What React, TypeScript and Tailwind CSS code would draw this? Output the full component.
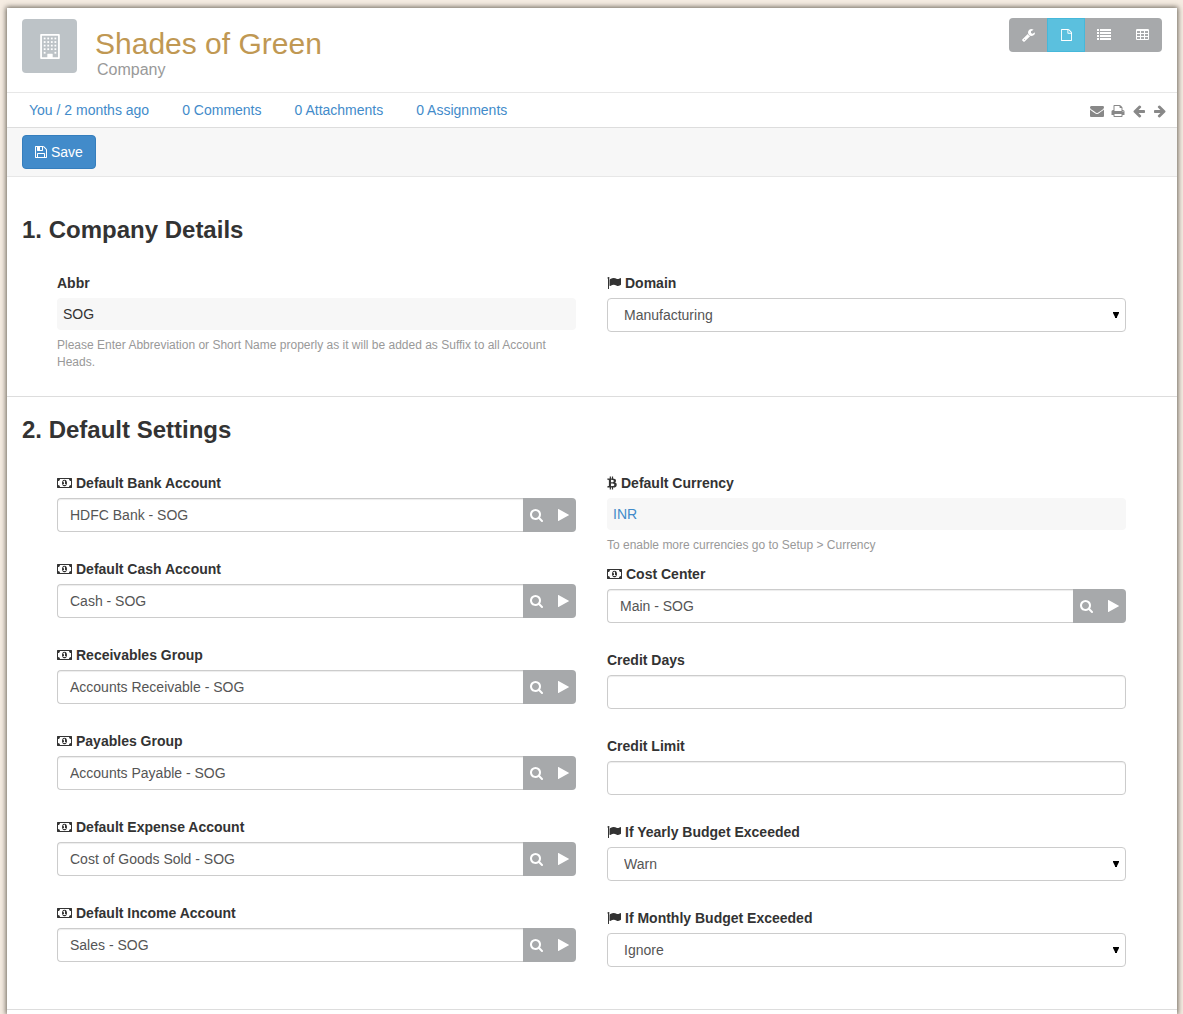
import React, { useState } from "react";
import type { ReactNode } from "react";

type Glyph = { box: string; w: string; d: string };

const ICONS = {
  search: {
    box: "64 128 1664 1664",
    w: "h-[13px] w-[13px]",
    d: "M1216 832q0-185-131.5-316.5t-316.5-131.5-316.5 131.5-131.5 316.5 131.5 316.5 316.5 131.5 316.5-131.5 131.5-316.5zm512 832q0 52-38 90t-90 38q-54 0-90-38l-343-342q-179 124-399 124-143 0-273.5-55.5t-225-150-150-225-55.5-273.5 55.5-273.5 150-225 225-150 273.5-55.5 273.5 55.5 225 150 150 225 55.5 273.5q0 220-124 399l343 343q37 37 37 90z",
  },
  play: {
    box: "192 128 1408 1536",
    w: "h-3 w-[11px]",
    d: "M1576 927l-1328 738q-23 13-39.5 3t-16.5-36v-1472q0-26 16.5-36t39.5 3l1328 738q23 13 23 31t-23 31z",
  },
  arrowLeft: {
    box: "0 128 1792 1792",
    w: "h-3.5 w-3.5",
    d: "M1664 896v128q0 53-32.5 90.5t-84.5 37.5h-704l293 294q38 36 38 90t-38 90l-75 76q-37 37-90 37-52 0-91-37l-651-652q-37-37-37-90 0-52 37-91l651-650q38-38 91-38 52 0 90 38l75 74q38 38 38 91t-38 91l-293 293h704q52 0 84.5 37.5t32.5 90.5z",
  },
  arrowRight: {
    box: "0 128 1792 1792",
    w: "h-3.5 w-3.5",
    d: "M1600 960q0 54-37 91l-651 651q-39 37-91 37-51 0-90-37l-75-75q-38-38-38-91t38-91l293-293h-704q-52 0-84.5-37.5t-32.5-90.5v-128q0-53 32.5-90.5t84.5-37.5h704l-293-294q-38-36-38-90t38-90l75-75q38-38 90-38 53 0 91 38l651 651q37 35 37 90z",
  },
  envelope: {
    box: "0 128 1792 1792",
    w: "h-3.5 w-3.5",
    d: "M1792 710v794q0 66-47 113t-113 47h-1472q-66 0-113-47t-47-113v-794q44 49 101 87 362 246 497 345 57 42 92.5 65.5t94.5 48 110 24.5h2q51 0 110-24.5t94.5-48 92.5-65.5q170-123 498-345 57-39 100-87zm0-294q0 79-49 151t-122 123q-376 261-468 325-10 7-42.5 31t-54 38.5-52 32.5-57.5 27-50 9h-2q-23 0-50-9t-57.5-27-52-32.5-54-38.5-42.5-31q-91-64-262-182.5t-205-142.5q-62-42-117-115.5t-55-136.5q0-78 41.5-130t118.5-52h1472q65 0 112.5 47t47.5 113z",
  },
  print: {
    box: "0 128 1792 1792",
    w: "h-3.5 w-3.5",
    d: "M448 1536h896v-256h-896v256zm0-640h896v-384h-160q-40 0-68-28t-28-68v-160h-640v640zm1152 64q0-26-19-45t-45-19-45 19-19 45 19 45 45 19 45-19 19-45zm128 0v416q0 13-9.5 22.5t-22.5 9.5h-224v160q0 40-28 68t-68 28h-960q-40 0-68-28t-28-68v-160h-224q-13 0-22.5-9.5t-9.5-22.5v-416q0-79 56.5-135.5t135.5-56.5h64v-544q0-40 28-68t68-28h672q40 0 88 20t76 48l152 152q28 28 48 76t20 88v256h64q79 0 135.5 56.5t56.5 135.5z",
  },
  wrench: {
    box: "64 128 1664 1664",
    w: "h-[13px] w-[13px]",
    d: "M448 1472q0-26-19-45t-45-19-45 19-19 45 19 45 45 19 45-19 19-45zm644-420l-682 682q-37 37-90 37-52 0-91-37l-106-108q-38-36-38-90 0-53 38-91l681-681q39 98 114.5 173.5t173.5 114.5zm634-435q0 39-23 106-47 134-164.5 217.5t-258.5 83.5q-185 0-316.5-131.5t-131.5-316.5 131.5-316.5 316.5-131.5q58 0 121.5 16.5t107.5 46.5q16 11 16 28t-16 28l-293 169v224l193 107q5-3 79-48.5t135.5-81 70.5-35.5q15 0 23.5 10t8.5 25z",
  },
  file: {
    box: "128 0 1536 1664",
    w: "h-3 w-[11px]",
    d: "M1596 380q28 28 48 76t20 88v1024q0 40-28 68t-68 28h-1344q-40 0-68-28t-28-68v-1472q0-40 28-68t68-28h896q40 0 88 20t76 48zm-444-244v376h376q-10-29-22-41l-313-313q-12-12-41-22zm384 1400v-896h-416q-40 0-68-28t-28-68v-416h-768v1408h1280z",
  },
  list: {
    box: "0 128 1792 1536",
    w: "h-3 w-3.5",
    d: "M0 128h256v256h-256zM384 128h1408v256h-1408zM0 512h256v256h-256zM384 512h1408v256h-1408zM0 896h256v256h-256zM384 896h1408v256h-1408zM0 1280h256v256h-256zM384 1280h1408v256h-1408z",
  },
  table: {
    box: "64 128 1664 1536",
    w: "h-3 w-[13px]",
    d: "M1728 288v1088q0 66-47 113t-113 47h-1344q-66 0-113-47t-47-113v-1088q0-66 47-113t113-47h1344q66 0 113 47t47 113zM192 384v256h384v-256zM704 384v256h384v-256zM1216 384v256h384v-256zM192 768v256h384v-256zM704 768v256h384v-256zM1216 768v256h384v-256zM192 1152v256h384v-256zM704 1152v256h384v-256zM1216 1152v256h384v-256z",
  },
  flag: {
    box: "0 0 1792 1792",
    w: "h-3.5 w-3.5",
    d: "M320 256q0 72-64 110v1266q0 13-9.5 22.5t-22.5 9.5h-64q-13 0-22.5-9.5t-9.5-22.5v-1266q-64-38-64-110 0-53 37.5-90.5t90.5-37.5 90.5 37.5 37.5 90.5zm1472 64v763q0 25-12.5 38.5t-39.5 27.5q-215 116-369 116-61 0-123.5-22t-108.5-48-115.5-48-142.5-22q-192 0-464 146-17 9-33 9-26 0-45-19t-19-45v-742q0-32 31-55 21-14 79-43 236-120 421-120 107 0 200 29t219 88q38 19 88 19 54 0 117.5-21t110-47 88-47 54.5-21q26 0 45 19t19 45z",
  },
  money: {
    box: "0 0 1920 1792",
    w: "h-3.5 w-[15px]",
    d: "M768 1152h384v-96h-128v-448h-114l-148 137 77 80q42-37 55-57h2v288h-128v96zm512-256q0 70-21 142t-59.5 134-101.5 101-138 39-138-39-101.5-101-59.5-134-21-142 21-142 59.5-134 101.5-101 138-39 138 39 101.5 101 59.5 134 21 142zm512 256v-512q-106 0-181-75t-75-181h-1152q0 106-75 181t-181 75v512q106 0 181 75t75 181h1152q0-106 75-181t181-75zm128-832v1152q0 26-19 45t-45 19h-1792q-26 0-45-19t-19-45v-1152q0-26 19-45t45-19h1792q26 0 45 19t19 45z",
  },
  bitcoin: {
    box: "256 0 1280 1792",
    w: "h-3.5 w-2.5",
    d: "M1408 581q18 182-131 258 117 28 175 103t45 214q-7 71-32.5 125t-64.5 89-97 58.5-121.5 34.5-145.5 15v255h-154v-251q-80 0-122-1v252h-154v-255q-18 0-54-.5t-55-.5h-200l31-183h111q50 0 58-51v-402h16q-6-1-16-1v-287q-13-68-89-68h-111v-164l212 1q64 0 97-1v-252h154v247q82-2 122-2v-245h154v252q79 7 140 22.5t113 45 82.5 78 36.5 114.5zm-215 545q0-36-15-64t-37-46-57.5-30.5-65.5-18.5-74-9-69-3-64.5 1-47.5 1v338q8 0 37 .5t48 .5 53-1.5 58.5-4 57-8.5 55.5-14 47.5-21 39.5-30 24.5-40 9.5-51zm-71-476q0-33-12.5-58.5t-30.5-42-48-28-55-16.5-61.5-8-58-2.5-54 1-39.5.5v307q5 0 34.5.5t46.5 0 50-2 55-5.5 51.5-11 48.5-18.5 37-27 27-38.5 9-51z",
  },
  save: {
    box: "128 128 1536 1536",
    w: "h-3 w-3",
    d: "M512 1536h768v-384h-768v384zm896 0h128v-896q0-14-10-38.5t-20-34.5l-281-281q-10-10-34-20t-39-10v416q0 40-28 68t-68 28h-576q-40 0-68-28t-28-68v-416h-128v1280h128v-416q0-40 28-68t68-28h832q40 0 68 28t28 68v416zm-384-928v-320q0-13-9.5-22.5t-22.5-9.5h-192q-13 0-22.5 9.5t-9.5 22.5v320q0 13 9.5 22.5t22.5 9.5h192q13 0 22.5-9.5t9.5-22.5zm640 32v928q0 40-28 68t-68 28h-1344q-40 0-68-28t-28-68v-1344q0-40 28-68t68-28h928q40 0 88 20t76 48l280 280q28 28 48 76t20 88z",
  },
} satisfies Record<string, Glyph>;

type IconName = keyof typeof ICONS;

function Icon({ name }: { name: IconName }) {
  const g = ICONS[name];
  return (
    <svg viewBox={g.box} className={`shrink-0 ${g.w}`} fill="currentColor" fillRule="evenodd" aria-hidden="true">
      <path d={g.d} />
    </svg>
  );
}

function BuildingIcon() {
  const cols = [448, 704, 960, 1216];
  const rows = [256, 512, 768, 1024];
  return (
    <svg viewBox="192 0 1408 1792" className="h-[25px] w-5" fill="currentColor" aria-hidden="true">
      <path
        fillRule="evenodd"
        d="M256 0h1280q64 0 64 64v1664q0 64-64 64h-1280q-64 0-64-64v-1664q0-64 64-64zM320 128v1536h384v-224q0-32 32-32h320q32 0 32 32v224h384v-1536z"
      />
      {rows.map((y) => cols.map((x) => <rect key={`${x}-${y}`} x={x} y={y} width="128" height="128" />))}
      <rect x="448" y="1280" width="128" height="128" />
      <rect x="1216" y="1280" width="128" height="128" />
    </svg>
  );
}

function Label({ id, icon, children }: { id: string; icon?: IconName; children: ReactNode }) {
  return (
    <label htmlFor={id} className="mb-[5px] flex h-5 items-center gap-1 self-start font-bold leading-5">
      {icon && <Icon name={icon} />}
      {children}
    </label>
  );
}

const inputBase =
  "h-[34px] w-full min-w-0 border border-[#ccc] bg-white px-3 text-sm text-[#555] shadow-[inset_0_1px_1px_rgba(0,0,0,0.075)] outline-none focus:border-[#66afe9]";

function TextField({ id, label }: { id: string; label: string }) {
  return (
    <div className="mb-[27px] flex flex-col">
      <Label id={id}>{label}</Label>
      <input id={id} type="text" className={`rounded ${inputBase}`} />
    </div>
  );
}

function LinkField({ id, label, value }: { id: string; label: string; value: string }) {
  return (
    <div className="mb-[27px] flex flex-col">
      <Label id={id} icon="money">{label}</Label>
      <div className="flex">
        <input id={id} type="text" defaultValue={value} className={`rounded-l border-r-0 ${inputBase}`} />
        <div className="flex h-[34px] shrink-0 overflow-hidden rounded-r bg-[#a7a9ab] text-white">
          <button type="button" aria-label={`Search ${label}`} className="flex w-[27px] items-center justify-center">
            <Icon name="search" />
          </button>
          <button type="button" aria-label={`Open ${label}`} className="flex w-[26px] items-center justify-center">
            <Icon name="play" />
          </button>
        </div>
      </div>
    </div>
  );
}

function SelectField({ id, label, options }: { id: string; label: string; options: string[] }) {
  return (
    <div className="mb-[27px] flex flex-col">
      <Label id={id} icon="flag">{label}</Label>
      <div className="relative">
        <select
          id={id}
          className="block h-[34px] w-full appearance-none rounded border border-[#ccc] bg-white px-4 text-sm text-[#555] outline-none focus:border-[#66afe9]"
        >
          {options.map((o) => (
            <option key={o}>{o}</option>
          ))}
        </select>
        <svg viewBox="0 0 6 6" className="pointer-events-none absolute right-[7px] top-3.5 h-1.5 w-1.5" aria-hidden="true">
          <path d="M0 0h6v1l-2 4v1h-2v-1l-2-4z" fill="#000" />
        </svg>
      </div>
    </div>
  );
}

function ReadOnlyField({ id, label, icon, help, children }: { id: string; label: string; icon?: IconName; help: string; children: ReactNode }) {
  return (
    <div className="mb-2.5 flex flex-col">
      <Label id={id} icon={icon}>{label}</Label>
      <output id={id} className="flex h-8 items-center rounded bg-[#f7f7f7] px-1.5">{children}</output>
      <p className="mt-[7px] text-xs leading-[17px] text-[#999]">{help}</p>
    </div>
  );
}

function Section({ title, first, children }: { title: string; first?: boolean; children: ReactNode }) {
  return (
    <section className={`border-b border-[#ddd] px-[15px] pb-[15px] ${first ? "pt-10" : "pt-5"}`}>
      <h2 className="text-2xl font-bold leading-[26px]">{title}</h2>
      <div className="mt-[30px] grid grid-cols-2 gap-[31px] pl-[35px] pr-9">{children}</div>
    </section>
  );
}

const stats = ["You / 2 months ago", "0 Comments", "0 Attachments", "0 Assignments"];
const views: { icon: IconName; label: string }[] = [
  { icon: "wrench", label: "Tools" },
  { icon: "file", label: "Form" },
  { icon: "list", label: "List" },
  { icon: "table", label: "Report" },
];
const actions: { icon: IconName; label: string }[] = [
  { icon: "envelope", label: "Email" },
  { icon: "print", label: "Print" },
  { icon: "arrowLeft", label: "Previous" },
  { icon: "arrowRight", label: "Next" },
];
const accounts = [
  ["bank", "Default Bank Account", "HDFC Bank - SOG"],
  ["cash", "Default Cash Account", "Cash - SOG"],
  ["receivables", "Receivables Group", "Accounts Receivable - SOG"],
  ["payables", "Payables Group", "Accounts Payable - SOG"],
  ["expense", "Default Expense Account", "Cost of Goods Sold - SOG"],
  ["income", "Default Income Account", "Sales - SOG"],
];

export default function App() {
  const [view, setView] = useState("Form");
  return (
    <div className="flex min-h-screen flex-col bg-[#f5ece2] pl-[7px] pr-1.5 pt-2 font-['Liberation_Sans',Arial,sans-serif] text-sm leading-5 text-[#333]">
      <main className="w-full flex-1 bg-white shadow-[0_0_5px_1px_rgba(70,65,55,0.8)]">
        <header className="flex items-start justify-between px-[15px] pb-3 pt-2.5">
          <div className="flex">
            <div className="mt-px flex h-[54px] w-[55px] items-center justify-center rounded bg-[#bdc3c7] text-white">
              <BuildingIcon />
            </div>
            <div className="ml-[18px] pt-2.5">
              <h1 className="text-[30px] leading-8 text-[#c09853]">Shades of Green</h1>
              <p className="ml-0.5 text-base leading-5 text-[#999]">Company</p>
            </div>
          </div>
          <div className="flex h-[34px] overflow-hidden rounded bg-[#a7a9ab] text-white">
            {views.map((v) => (
              <button
                key={v.label}
                type="button"
                aria-label={v.label}
                aria-pressed={view === v.label}
                onClick={() => setView(v.label)}
                className={`flex w-[38px] items-center justify-center border last:w-[39px] ${
                  view === v.label ? "border-[#46b8da] bg-[#5bc0de]" : "border-transparent"
                }`}
              >
                <Icon name={v.icon} />
              </button>
            ))}
          </div>
        </header>
        <nav className="flex h-9 items-center justify-between border-b border-t border-b-[#ddd] border-t-[#e7e7e7] pl-[22px] pr-2.5">
          <div className="flex gap-[33px]">
            {stats.map((s) => (
              <a key={s} href="#" className="text-[#428bca]">{s}</a>
            ))}
          </div>
          <div className="flex gap-[7px] pt-[3px] text-[#888]">
            {actions.map((a) => (
              <button key={a.label} type="button" aria-label={a.label}>
                <Icon name={a.icon} />
              </button>
            ))}
          </div>
        </nav>
        <div className="border-b border-[#e7e7e7] bg-[#f7f7f7] px-[15px] py-[7px]">
          <button type="button" className="flex h-[34px] items-center gap-1 rounded border border-[#357ebd] bg-[#428bca] px-3 text-white">
            <Icon name="save" />
            Save
          </button>
        </div>
        <form onSubmit={(e) => e.preventDefault()}>
          <Section title="1. Company Details" first>
            <div>
              <ReadOnlyField
                id="abbr"
                label="Abbr"
                help="Please Enter Abbreviation or Short Name properly as it will be added as Suffix to all Account Heads."
              >
                SOG
              </ReadOnlyField>
            </div>
            <div>
              <SelectField id="domain" label="Domain" options={["Manufacturing", "Distribution", "Retail", "Services"]} />
            </div>
          </Section>
          <Section title="2. Default Settings">
            <div>
              {accounts.map(([id, label, value]) => (
                <LinkField key={id} id={id} label={label} value={value} />
              ))}
            </div>
            <div>
              <ReadOnlyField id="currency" label="Default Currency" icon="bitcoin" help="To enable more currencies go to Setup > Currency">
                <a href="#" className="text-[#428bca]">INR</a>
              </ReadOnlyField>
              <LinkField id="cost-center" label="Cost Center" value="Main - SOG" />
              <TextField id="credit-days" label="Credit Days" />
              <TextField id="credit-limit" label="Credit Limit" />
              <SelectField id="yearly" label="If Yearly Budget Exceeded" options={["Warn", "Ignore", "Stop"]} />
              <SelectField id="monthly" label="If Monthly Budget Exceeded" options={["Ignore", "Warn", "Stop"]} />
            </div>
          </Section>
        </form>
      </main>
    </div>
  );
}
